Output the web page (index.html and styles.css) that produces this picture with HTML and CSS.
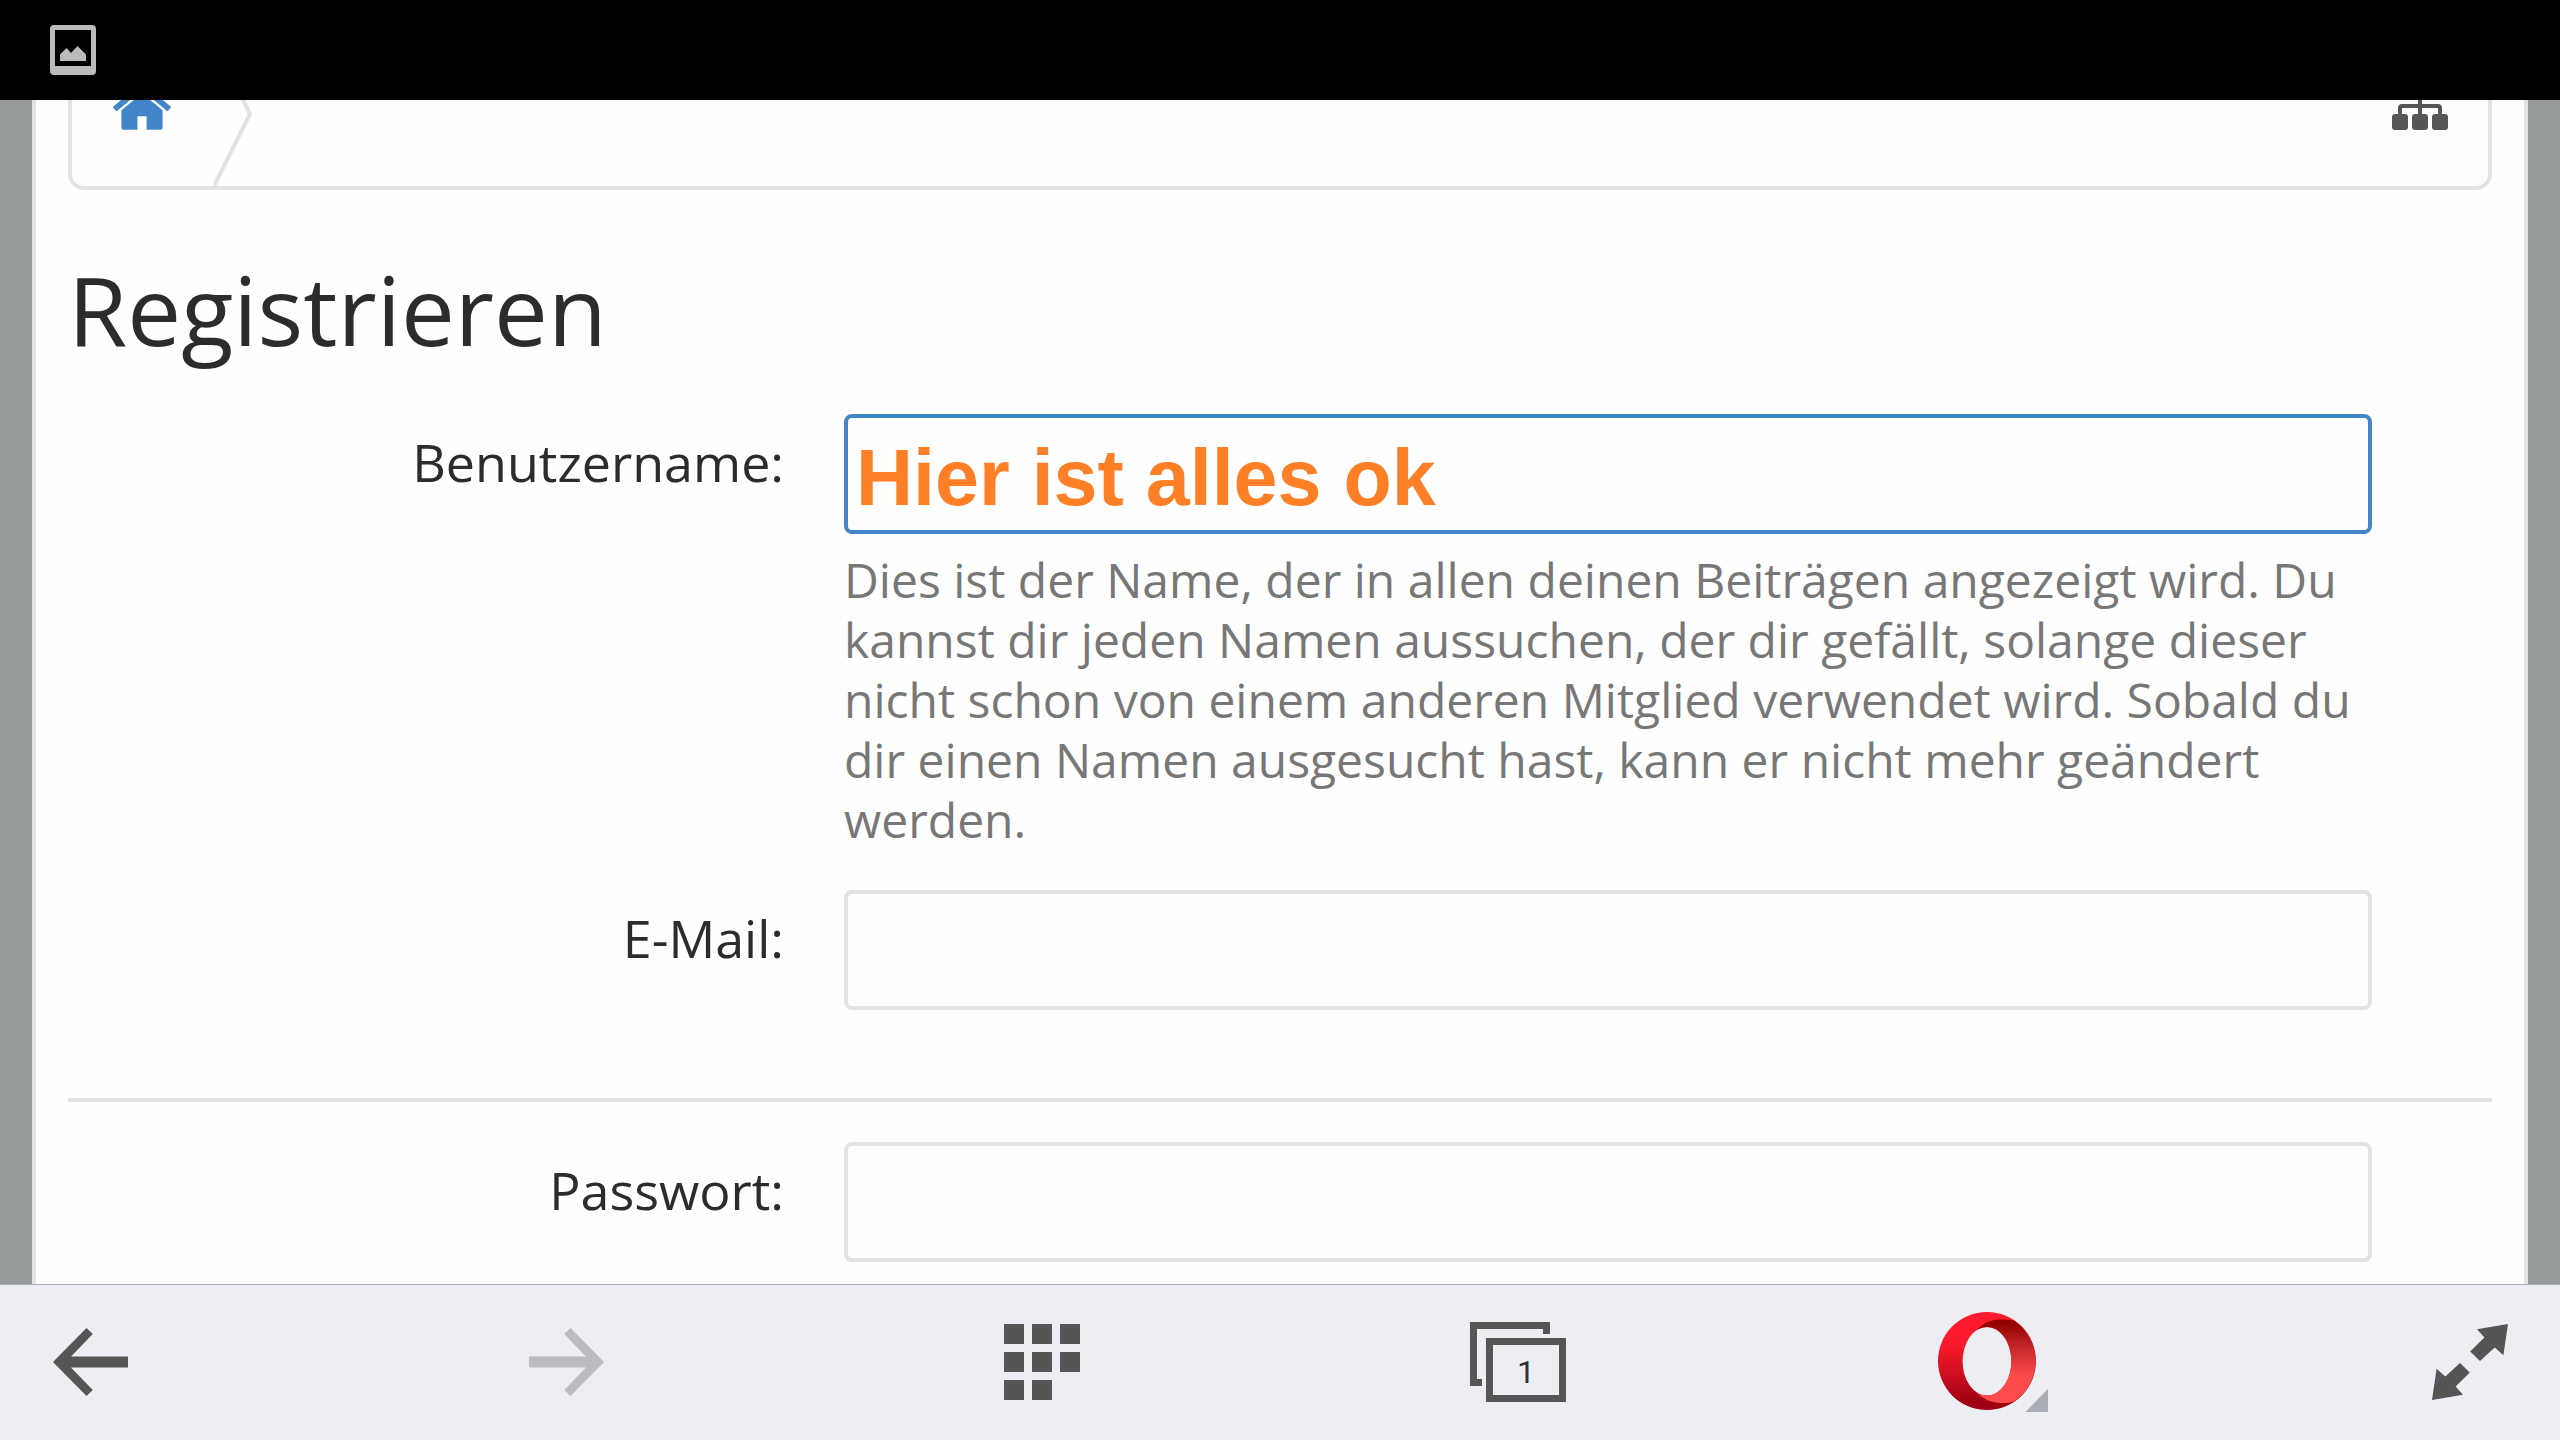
FILE: index.html
```html
<!DOCTYPE html>
<html lang="de">

<head>
	<meta charset="UTF-8" />
	<meta name="viewport" content="width=device-width, initial-scale=1.0" />
	<title>Registrieren</title>
	<link rel="stylesheet" href="styles.css">
</head>

<body>
	<!-- status bar -->
	<div class="status-bar">
		<svg width="46" height="50" viewBox="0 0 46 50">
			<path fill="#bbb" fill-rule="evenodd" d="M4 0h38q4 0 4 4v42q0 4-4 4H4q-4 0-4-4V4q0-4 4-4zM5 5v36h36V5z" />
			<path fill="#bbb" d="M10 36v-6.500l6.500-6.500 4.500 5 6.500-7 8.500 8.500v6.500z" />
		</svg>
	</div>

	<!-- page -->
	<div class="viewport">
		<main class="page">
			<nav class="breadcrumb">
				<a class="home" href="#" aria-label="Startseite">
					<svg width="64" height="64" viewBox="0 0 1792 1792" fill="currentColor">
						<path d="M1472 992v480q0 26-19 45t-45 19h-384v-384h-256v384h-384q-26 0-45-19t-19-45v-480q0-1 .5-3t.5-3l575-474 575 474q1 2 1 6zm223-69l-62 74q-8 9-21 11h-3q-13 0-21-7l-692-577-692 577q-12 8-24 7-13-2-21-11l-62-74q-8-10-7-23.500t11-21.500l719-599q32-26 76-26t76 26l244 204v-195q0-14 9-23t23-9h192q14 0 23 9t9 23v408l219 182q10 8 11 21.500t-7 23.500z" />
					</svg>
				</a>
				<svg class="separator" width="40" height="144" viewBox="0 0 40 144">
					<path fill="none" stroke="#e2e2e2" stroke-width="4" d="M-1-2l37 74-37 74" />
				</svg>
				<a class="sitemap" href="#" aria-label="Sitemap">
					<svg width="56" height="56" viewBox="0 0 56 56" fill="currentColor">
						<rect x="20" y="0" width="16" height="16" rx="3" />
						<rect x="0" y="40" width="16" height="16" rx="3" />
						<rect x="20" y="40" width="16" height="16" rx="3" />
						<rect x="40" y="40" width="16" height="16" rx="3" />
						<path d="M26 16h4v14h16q4 0 4 4v6h-4v-6H30v6h-4v-6H10v6H6v-6q0-4 4-4h16z" />
					</svg>
				</a>
			</nav>

			<h1 class="title">Registrieren</h1>

			<form>
				<div class="row">
					<label for="username">Benutzername:</label>
					<div class="field">
						<input class="active" type="text" id="username" value="Hier ist alles ok">
						<small>Dies ist der Name, der in allen deinen Beiträgen angezeigt wird. Du kannst dir jeden Namen aussuchen, der dir gefällt, solange dieser nicht schon von einem anderen Mitglied verwendet wird. Sobald du dir einen Namen ausgesucht hast, kann er nicht mehr geändert werden.</small>
					</div>
				</div>
				<div class="row">
					<label for="email">E-Mail:</label>
					<div class="field">
						<input type="email" id="email">
					</div>
				</div>
				<hr>
				<div class="row">
					<label for="password">Passwort:</label>
					<div class="field">
						<input type="password" id="password">
					</div>
				</div>
			</form>
		</main>
	</div>

	<!-- browser toolbar -->
	<div class="toolbar">
		<button type="button" aria-label="Zurück">
			<svg width="76" height="68" viewBox="0 0 76 68" fill="currentColor">
				<path d="M1 34L34.500 0l6.300 6L19 28.500h57v11H19L40.800 62l-6.300 6z" />
			</svg>
		</button>
		<button type="button" aria-label="Vorwärts" disabled>
			<svg width="76" height="68" viewBox="0 0 76 68" fill="currentColor">
				<path d="M76 34L42.500 0l-6.300 6L58 28.500H1v11h57L36.200 62l6.300 6z" />
			</svg>
		</button>
		<button type="button" aria-label="Schnellwahl">
			<svg width="76" height="76" viewBox="0 0 76 76" fill="currentColor">
				<path d="M0 0h20v20H0zM28 0h20v20H28zM56 0h20v20H56zM0 28h20v20H0zM28 28h20v20H28zM56 28h20v20H56zM0 56h20v20H0zM28 56h20v20H28z" />
			</svg>
		</button>
		<button type="button" aria-label="Tabs">
			<svg width="96" height="80" viewBox="0 0 96 80" fill="currentColor">
				<path d="M0 0h80v12h-7V7H7v50h5v7H0z" />
				<path fill-rule="evenodd" d="M16 16h80v64H16zM23 23v50h66V23z" />
				<text class="tab-count" x="56" y="61" text-anchor="middle">1</text>
			</svg>
		</button>
		<button type="button" aria-label="Opera">
			<svg width="112" height="100" viewBox="0 0 112 100">
				<defs>
					<linearGradient id="ring" x1="0" y1="0" x2="0" y2="1">
						<stop offset="0.200" stop-color="#ff1b2d" />
						<stop offset="0.380" stop-color="#f4182a" />
						<stop offset="0.620" stop-color="#d00f20" />
						<stop offset="0.930" stop-color="#9c0012" />
					</linearGradient>
					<linearGradient id="fold" x1="0" y1="0" x2="0" y2="1">
						<stop offset="0.050" stop-color="#940000" />
						<stop offset="0.350" stop-color="#c62a2a" />
						<stop offset="0.680" stop-color="#ff4b4b" />
					</linearGradient>
				</defs>
				<path fill="url(#ring)" fill-rule="evenodd" d="M49 0a49 49 0 0 1 0 98a49 49 0 0 1 0-98zM49 15a24.400 34.300 0 0 0 0 68.600a24.400 34.300 0 0 0 0-68.600z" />
				<path fill="url(#fold)" d="M38 18.600C46 10 55 7.500 63 7.500C69 7.500 73 8 76 8.500A49 49 0 0 1 76 89.500C73 91 69 91 63 91C54 91 45 87 38 80A24.400 34.300 0 1 0 38 18.600z" />
				<path fill="#a9acb6" d="M110 77v23H87.500z" />
			</svg>
		</button>
		<button type="button" aria-label="Vollbild">
			<svg width="76" height="76" viewBox="0 0 76 76" fill="currentColor">
				<path d="M76 0L45 5.300l7.400 8.300-14.200 14L48 37l14.700-13.400 8.700 7.700z" />
				<path d="M0 76l31-5.300-7.400-8.300 14.200-14L28 39 13.300 52.400l-8.700-7.700z" />
			</svg>
		</button>
	</div>
</body>

</html>
```
FILE: styles.css
```css
* {
	box-sizing: border-box;
}

body {
	display: flex;
	flex-direction: column;
	height: 100vh;
	margin: 0;
	font-family: "Open Sans", sans-serif;
	font-size: 52px;
	color: #2c2c2c;
	background: #979b9b;
}

svg {
	display: block;
}

/* status bar */
.status-bar {
	flex: none;
	display: flex;
	align-items: center;
	height: 100px;
	padding: 0 50px;
	background: #000;
}

/* page */
.viewport {
	flex: 1;
	min-height: 0;
	padding: 0 32px;
	overflow: hidden;
}

.page {
	display: flow-root;
	min-height: 100%;
	padding: 0 32px;
	background: #fefefe;
	border: 4px solid #e2e2e2;
	border-width: 0 4px;
}

/* the page is scrolled, so the top of the bar is cut off */
.breadcrumb {
	display: flex;
	align-items: center;
	height: 152px;
	margin-top: -62px;
	border: 4px solid #e2e2e2;
	border-radius: 16px;
}

.home {
	padding: 0 40px 14px 38px;
	color: #4285c9;
}

.sitemap {
	margin-left: auto;
	padding: 0 40px 24px;
	color: #555;
}

.title {
	margin: 59px 0 45px;
	font-size: 96px;
	font-weight: 400;
	line-height: 120px;
}

.row {
	display: grid;
	grid-template-columns: 716fr 1528fr;
	column-gap: 60px;
	margin-bottom: 40px;
	padding-right: 120px;
}

.row label {
	padding-top: 12px;
	line-height: 72px;
	text-align: right;
}

.field input {
	display: block;
	width: 100%;
	height: 120px;
	padding: 8px 8px 0;
	font-family: "Liberation Sans", Arial, sans-serif;
	font-size: 79px;
	font-weight: bold;
	color: #ff7f27;
	background: #fefefe;
	border: 4px solid #e2e2e2;
	border-radius: 8px;
	outline: none;
}

.field input.active,
.field input:focus {
	border-color: #4285c9;
}

.field small {
	display: block;
	margin-top: 16px;
	font-size: 48px;
	line-height: 60px;
	color: #777;
}

hr {
	margin: 88px 0 40px;
	border: 0;
	border-top: 4px solid #e2e2e2;
}

/* toolbar */
.toolbar {
	flex: none;
	display: flex;
	align-items: center;
	justify-content: space-between;
	height: 156px;
	padding: 0 36px;
	background: #edeef4;
	border-top: 1px solid #b0b0b6;
}

.toolbar button {
	display: flex;
	align-items: center;
	justify-content: center;
	width: 108px;
	height: 100%;
	padding: 0 0 1px;
	color: #555;
	background: none;
	border: 0;
	cursor: pointer;
}

.toolbar button svg {
	flex: none;
}

.toolbar button:disabled {
	color: #bbbcc1;
	cursor: default;
}

.tab-count {
	font-family: Roboto, sans-serif;
	font-size: 32px;
	fill: #333;
}
```
